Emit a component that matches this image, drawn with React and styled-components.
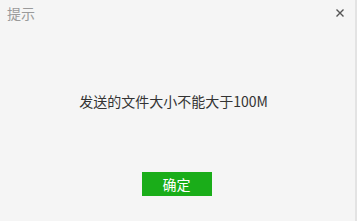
import React from "react";
import styled, { createGlobalStyle } from "styled-components";

const Global = createGlobalStyle`
  html, body { margin: 0; padding: 0; background: #f5f5f5; }
  body { font-family: "Noto Sans CJK SC", "Noto Sans", sans-serif; }
`;

const Dialog = styled.div`
  width: 357px;
  height: 221px;
  box-sizing: border-box;
  background: #f5f5f5;
  border-right: 2px solid #e3e3e3;
  display: flex;
  flex-direction: column;
`;

const TitleBar = styled.div`
  height: 26px;
  display: flex;
  align-items: center;
  justify-content: space-between;
  padding: 0 11px 0 7px;
`;

const Title = styled.span`
  font-size: 14px;
  color: #9a9a9a;
  line-height: 1;
`;

const Close = styled.button`
  width: 9px;
  height: 9px;
  padding: 0;
  border: 0;
  background: transparent;
  display: flex;
  align-items: center;
  justify-content: center;
`;

const Body = styled.div`
  height: 146px;
  box-sizing: border-box;
  padding: 3px 8px 0 0;
  display: flex;
  align-items: center;
  justify-content: center;
  font-size: 14px;
  color: #333;
`;

const Footer = styled.div`
  display: flex;
  justify-content: center;
  padding-right: 2px;
`;

const PrimaryButton = styled.button`
  width: 70px;
  height: 24px;
  border: 0;
  background: #1aad19;
  color: #fff;
  font-family: inherit;
  font-size: 14px;
  padding: 0;
`;

export default function App() {
  return (
    <>
      <Global />
      <Dialog>
        <TitleBar>
          <Title>提示</Title>
          <Close aria-label="close">
            <svg width="8" height="8" viewBox="0 0 8 8">
              <path d="M0.5 0.5L7.5 7.5M7.5 0.5L0.5 7.5" stroke="#555" strokeWidth="1.4" />
            </svg>
          </Close>
        </TitleBar>
        <Body>发送的文件大小不能大于100M</Body>
        <Footer>
          <PrimaryButton>确定</PrimaryButton>
        </Footer>
      </Dialog>
    </>
  );
}
